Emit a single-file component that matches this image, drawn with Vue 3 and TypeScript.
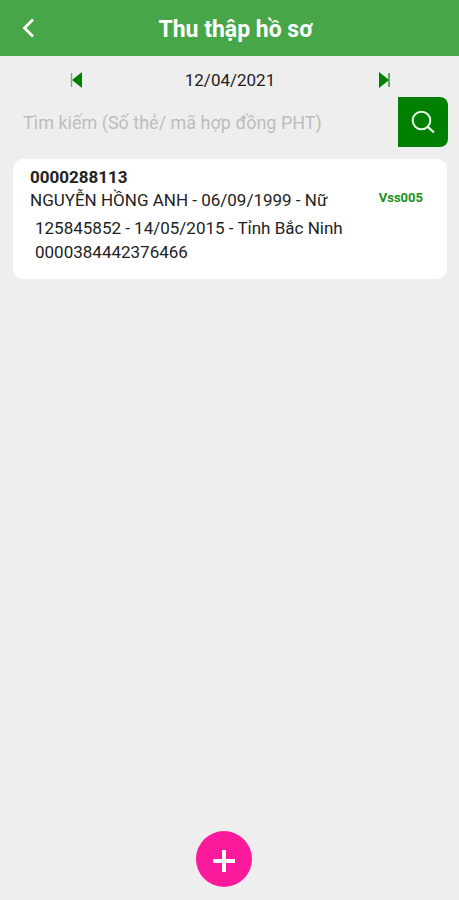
<script setup lang="ts">
import { computed, ref } from 'vue'

interface Dossier {
  code: string
  name: string
  birthDate: string
  gender: string
  idNumber: string
  issueDate: string
  province: string
  account: string
  owner: string
}

const day = ref(new Date(2021, 3, 12))
const query = ref('')

const dossiers = ref<Dossier[]>([
  {
    code: '0000288113',
    name: 'NGUYỄN HỒNG ANH',
    birthDate: '06/09/1999',
    gender: 'Nữ',
    idNumber: '125845852',
    issueDate: '14/05/2015',
    province: 'Tỉnh Bắc Ninh',
    account: '0000384442376466',
    owner: 'Vss005',
  },
])

const dayLabel = computed(() => {
  const d = day.value
  const pad = (n: number) => String(n).padStart(2, '0')
  return `${pad(d.getDate())}/${pad(d.getMonth() + 1)}/${d.getFullYear()}`
})

function shiftDay(step: number) {
  const d = new Date(day.value)
  d.setDate(d.getDate() + step)
  day.value = d
}
</script>

<template>
  <div class="screen">
    <header class="bar">
      <button class="back" type="button" aria-label="Quay lại">
        <svg width="14" height="20" viewBox="0 0 14 20">
          <path d="M12 1.5 3.5 10l8.5 8.5" fill="none" stroke="#fff" stroke-width="2.7" />
        </svg>
      </button>
      <h1 class="title">Thu thập hồ sơ</h1>
    </header>

    <nav class="days">
      <button class="step" type="button" aria-label="Ngày trước" @click="shiftDay(-1)">
        <svg width="12" height="16" viewBox="0 0 12 16">
          <path d="M1.5 1v14" stroke="#6fb06f" stroke-width="1.4" />
          <path d="M12 0v16L2 8z" fill="#008000" />
        </svg>
      </button>
      <span class="date">{{ dayLabel }}</span>
      <button class="step" type="button" aria-label="Ngày sau" @click="shiftDay(1)">
        <svg width="12" height="16" viewBox="0 0 12 16">
          <path d="M11 1v14" stroke="#3f9c3f" stroke-width="1.6" />
          <path d="M1 0v16l10-8z" fill="#008000" />
        </svg>
      </button>
    </nav>

    <form class="search" @submit.prevent>
      <input
        v-model="query"
        class="field"
        type="text"
        aria-label="Tìm kiếm"
        placeholder="Tìm kiếm (Số thẻ/ mã hợp đồng PHT)"
      />
      <button class="go" type="submit" aria-label="Tìm">
        <svg width="24" height="24" viewBox="0 0 24 24" fill="none" stroke="#e6f7e6" stroke-width="2">
          <circle cx="10.5" cy="10.5" r="8.8" />
          <path d="M16.8 16.8 23 22.5" stroke-width="2.3" />
        </svg>
      </button>
    </form>

    <main class="list">
      <article v-for="d in dossiers" :key="d.code" class="card">
        <div class="top">
          <div class="person">
            <strong class="line">{{ d.code }}</strong>
            <span class="line">{{ d.name }} - {{ d.birthDate }} - {{ d.gender }}</span>
          </div>
          <span class="owner">{{ d.owner }}</span>
        </div>
        <div class="details">
          <span class="line">{{ d.idNumber }} - {{ d.issueDate }} - {{ d.province }}</span>
          <span class="line">{{ d.account }}</span>
        </div>
      </article>
    </main>

    <footer class="foot">
      <button class="add" type="button" aria-label="Thêm hồ sơ">
        <svg width="22" height="24" viewBox="0 0 22 24">
          <path d="M11 1v22M0 12h22" stroke="#fff" stroke-width="4" />
        </svg>
      </button>
    </footer>
  </div>
</template>

<style>
body {
  background: #eeeeee;
}
</style>

<style scoped>
.screen {
  display: flex;
  flex-direction: column;
  min-height: 100vh;
  box-sizing: border-box;
  background: #eeeeee;
  color: #222;
  font-family: Roboto, "Noto Sans", sans-serif;
  font-size: 17px;
}

button {
  display: flex;
  align-items: center;
  justify-content: center;
  padding: 0;
  border: 0;
  background: none;
  cursor: pointer;
}

.bar {
  display: grid;
  grid-template-columns: 56px 1fr 44px;
  align-items: center;
  height: 56px;
  background: #47a647;
}

.back {
  height: 56px;
}

.title {
  margin: 0;
  padding-top: 4px;
  color: #fff;
  font-size: 23px;
  font-weight: 700;
  line-height: 28px;
  text-align: center;
}

.days {
  display: flex;
  align-items: center;
  justify-content: space-between;
  height: 41px;
  padding: 6px 69px 0 70px;
  box-sizing: border-box;
}

.search {
  display: flex;
  padding: 0 11px 0 23px;
}

.field {
  flex: 1;
  min-width: 0;
  padding: 0;
  border: 0;
  outline: 0;
  background: transparent;
  color: #222;
  font-family: inherit;
  font-size: 18px;
}

.field::placeholder {
  color: #bdbdbd;
  opacity: 1;
}

.go {
  width: 50px;
  height: 50px;
  border-radius: 0 8px 8px 0;
  background: #008000;
}

.list {
  flex: 1;
  padding: 12px 12px 12px 13px;
}

.card {
  padding: 7px 24px 15px 17px;
  border-radius: 10px;
  background: #fff;
}

.top {
  display: flex;
  align-items: flex-end;
  justify-content: space-between;
}

.line {
  display: block;
  line-height: 24px;
}

.person .line {
  line-height: 23px;
}

.owner {
  color: #1b911b;
  font-size: 13px;
  font-weight: 700;
  line-height: 28px;
}

.details {
  padding: 4px 0 0 5px;
}

.foot {
  display: flex;
  justify-content: center;
  padding: 0 11px 13px 0;
}

.add {
  width: 56px;
  height: 56px;
  padding-top: 4px;
  border-radius: 50%;
  background: #fc1a9c;
}
</style>
